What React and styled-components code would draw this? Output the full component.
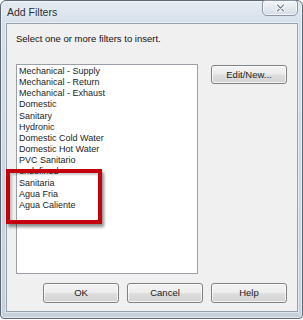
import React from "react";
import styled, { createGlobalStyle } from "styled-components";

const Global = createGlobalStyle`
  html, body { margin: 0; padding: 0; background: #ffffff; }
  body { font-family: "Liberation Sans", Arial, sans-serif; }
`;

const Window = styled.div`
  box-sizing: border-box;
  width: 303px;
  height: 319px;
  border: 1px solid #5d6874;
  border-radius: 6px 6px 4px 4px;
  background: linear-gradient(180deg, #e4ebf2 0%, #d5dfe9 8%, #cdd8e3 50%, #c6d1dc 100%);
  display: flex;
  flex-direction: column;
  box-shadow: inset 0 0 0 1px rgba(255, 255, 255, 0.55);
`;

const TitleBar = styled.div`
  height: 22px;
  display: flex;
  align-items: flex-start;
  justify-content: space-between;
  padding-left: 6px;
  padding-right: 4px;
`;

const Title = styled.div`
  margin-top: 4px;
  font-size: 10.5px;
  line-height: 14px;
  color: #2a2f36;
  text-shadow: 0 0 6px rgba(255, 255, 255, 0.9);
`;

const CloseButton = styled.div`
  box-sizing: border-box;
  width: 36px;
  height: 16px;
  margin-top: -1px;
  border: 1px solid #8a96a3;
  border-radius: 3px 3px 5px 5px;
  background: linear-gradient(180deg, #f3f6f9 0%, #e3e9ef 50%, #d5dde6 100%);
  box-shadow: inset 0 0 0 1px rgba(255, 255, 255, 0.7);
  display: flex;
  align-items: center;
  justify-content: center;
`;

const Client = styled.div`
  box-sizing: border-box;
  margin: 0 4px 0 5px;
  height: 289px;
  border: 1px solid #95a1ad;
  background: #f0f0f0;
  box-shadow: 0 0 0 1px rgba(255, 255, 255, 0.45);
  padding: 9px 10px 8px 9px;
  display: flex;
  flex-direction: column;
`;

const Prompt = styled.div`
  font-size: 9.5px;
  line-height: 12px;
  color: #111;
  height: 12px;
`;

const Middle = styled.div`
  margin-top: 19px;
  display: flex;
  align-items: flex-start;
  gap: 13px;
`;

const ListArea = styled.div`
  position: relative;
`;

const ListBox = styled.div`
  box-sizing: border-box;
  width: 182px;
  height: 210px;
  border: 1px solid #9a9ea6;
  background: #ffffff;
  padding: 1px 0 0 2px;
  overflow: hidden;
`;

const Item = styled.div`
  font-size: 9px;
  line-height: 11.17px;
  height: 11.17px;
  color: #1a1d24;
  white-space: nowrap;
`;

const Highlight = styled.div`
  position: absolute;
  left: -10px;
  top: 105px;
  width: 96px;
  height: 55px;
  box-sizing: border-box;
  border: 4px solid #c3000c;
  box-shadow: 2px 3px 3px rgba(0, 0, 0, 0.45), inset 2px 2px 2px rgba(0, 0, 0, 0.2);
  pointer-events: none;
`;

const Button = styled.button`
  box-sizing: border-box;
  width: 76px;
  height: ${(p) => p.$h || 20}px;
  margin-top: ${(p) => p.$mt || 0}px;
  padding: 0;
  border: 1px solid #7f8285;
  border-radius: 3px;
  background: linear-gradient(180deg, #f4f4f4 0%, #ececec 48%, #dedede 52%, #d3d3d3 100%);
  box-shadow: inset 0 0 0 1px rgba(255, 255, 255, 0.75);
  font-family: "Liberation Sans", Arial, sans-serif;
  font-size: 9.5px;
  line-height: 12px;
  color: #1a1a1a;
  display: flex;
  align-items: center;
  justify-content: center;
`;

const Footer = styled.div`
  margin-top: 9px;
  display: flex;
  justify-content: flex-end;
  gap: 8px;
`;

const items = [
  "Mechanical - Supply",
  "Mechanical - Return",
  "Mechanical - Exhaust",
  "Domestic",
  "Sanitary",
  "Hydronic",
  "Domestic Cold Water",
  "Domestic Hot Water",
  "PVC Sanitario",
  "undefined",
  "Sanitaria",
  "Agua Fria",
  "Agua Caliente",
];

function CloseGlyph() {
  return (
    <svg width="9" height="8" viewBox="0 0 9 8">
      <path d="M1.5 1 L7.5 7 M7.5 1 L1.5 7" stroke="#ffffff" strokeWidth="3" strokeLinecap="round" />
      <path d="M1.5 1 L7.5 7 M7.5 1 L1.5 7" stroke="#7d8894" strokeWidth="1.4" strokeLinecap="round" />
    </svg>
  );
}

export default function App() {
  return (
    <>
      <Global />
      <Window>
        <TitleBar>
          <Title>Add Filters</Title>
          <CloseButton>
            <CloseGlyph />
          </CloseButton>
        </TitleBar>
        <Client>
          <Prompt>Select one or more filters to insert.</Prompt>
          <Middle>
            <ListArea>
              <ListBox>
                {items.map((t) => (
                  <Item key={t}>{t}</Item>
                ))}
              </ListBox>
              <Highlight />
            </ListArea>
            <Button $h={19} $mt={1}>Edit/New...</Button>
          </Middle>
          <Footer>
            <Button>OK</Button>
            <Button>Cancel</Button>
            <Button>Help</Button>
          </Footer>
        </Client>
      </Window>
    </>
  );
}
